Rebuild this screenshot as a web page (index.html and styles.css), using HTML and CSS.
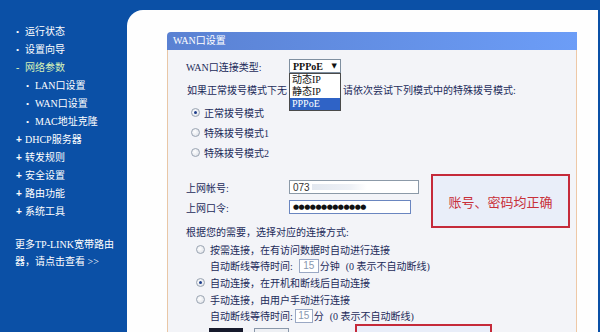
FILE: index.html
```html
<!DOCTYPE html>
<html lang="zh-CN">
<head>
    <meta charset="UTF-8">
    <title>WAN口设置</title>
    <link rel="stylesheet" href="styles.css">
</head>
<body>
    <!-- Menu lateral -->
    <aside class="sidebar">
        <ul class="menu">
            <li class="dot">运行状态</li>
            <li class="dot">设置向导</li>
            <li class="minus open">网络参数</li>
            <li class="dot sub">LAN口设置</li>
            <li class="dot sub">WAN口设置</li>
            <li class="dot sub">MAC地址克隆</li>
            <li class="plus">DHCP服务器</li>
            <li class="plus">转发规则</li>
            <li class="plus">安全设置</li>
            <li class="plus">路由功能</li>
            <li class="plus">系统工具</li>
        </ul>
        <p class="more">更多TP-LINK宽带路由<br>器，请点击查看 &gt;&gt;</p>
    </aside>

    <main class="main">
        <section class="panel">
            <div class="panel-head">WAN口设置</div>
            <div class="panel-body">
                <div class="field">
                    <span class="label">WAN口连接类型:</span>
                    <div class="select"><span>PPPoE</span><span class="arrow">▼</span></div>
                </div>
                <p class="note"><span class="cut">如果正常拨号模式下无法连接成功，</span><span class="rest">请依次尝试下列模式中的特殊拨号模式:</span></p>

                <div class="modes">
                    <div class="opt"><span class="radio checked"></span>正常拨号模式</div>
                    <div class="opt"><span class="radio"></span>特殊拨号模式1</div>
                    <div class="opt"><span class="radio"></span>特殊拨号模式2</div>
                </div>

                <div class="field account">
                    <span class="label">上网帐号:</span>
                    <div class="input user"><span>073</span><span class="blur"></span></div>
                </div>
                <div class="field password">
                    <span class="label">上网口令:</span>
                    <div class="input pass">●●●●●●●●●●●●●</div>
                </div>

                <p class="note lead">根据您的需要，选择对应的连接方式:</p>
                <div class="connect">
                    <div class="opt"><span class="radio"></span>按需连接，在有访问数据时自动进行连接</div>
                    <div class="opt indent">自动断线等待时间: <span class="time first">15</span>分钟 <span class="hint">(0 表示不自动断线)</span></div>
                    <div class="opt"><span class="radio checked"></span>自动连接，在开机和断线后自动连接</div>
                    <div class="opt"><span class="radio"></span>手动连接，由用户手动进行连接</div>
                    <div class="opt indent">自动断线等待时间:<span class="time">15</span>分 <span class="hint">(0 表示不自动断线)</span></div>
                </div>

                <div class="buttons">
                    <span class="btn dark"></span>
                    <span class="btn light"></span>
                </div>

                <!-- lista aberta do select -->
                <ul class="dropdown">
                    <li>动态IP</li>
                    <li>静态IP</li>
                    <li class="selected">PPPoE</li>
                </ul>

                <!-- anotações em vermelho -->
                <div class="mark mark-ok">账号、密码均正确</div>
                <div class="mark mark-bottom"></div>
            </div>
        </section>
    </main>
</body>
</html>
```

FILE: styles.css
```css
* {
    box-sizing: border-box;
}

body {
    margin: 0;
    width: 600px;
    height: 332px;
    overflow: hidden;
    display: flex;
    background-color: #0b50a6;
    font-family: "Liberation Serif", "Noto Sans CJK SC", serif;
    font-size: 10px;
    color: #1c2b5a;
}

.sidebar {
    width: 127px;
    flex: none;
    padding: 23px 0 0 15px;
    color: #fff;
}

.menu {
    list-style: none;
    margin: 0;
    padding: 0;
}

.menu li {
    height: 18px;
    line-height: 18px;
    white-space: nowrap;
}

.menu li::before {
    display: inline-block;
    width: 9px;
    padding-left: 1px;
}

.menu .dot::before {
    content: "•";
    font-size: 9px;
}

.menu .plus::before {
    content: "+";
    font-family: "Liberation Sans", sans-serif;
    font-weight: bold;
}

.menu .minus::before {
    content: "-";
    font-weight: bold;
}

.menu .open {
    color: #d6f2b8;
}

.menu .sub {
    padding-left: 10px;
}

.more {
    margin: 15px 0 0;
    line-height: 17px;
    white-space: nowrap;
}

.main {
    flex: 1;
    margin: 10px 2px 0 0;
    padding: 22px 0 0 40px;
    background-color: #fefefe;
    border-top-left-radius: 16px;
}

.panel {
    width: 410px;
}

.panel-head {
    height: 18px;
    line-height: 18px;
    padding-left: 6px;
    color: #fff;
    background: linear-gradient(to right, #5a81d2, #6c9df7);
    border-top-left-radius: 4px;
}

.panel-body {
    position: relative;
    height: 300px;
    padding: 8px 0 0 18px;
    background-color: #f3f4f8;
    border-left: 1px solid #e9c7a6;
    border-right: 1px solid #eec8a6;
}

.field {
    display: flex;
    align-items: center;
    height: 16px;
}

.label {
    width: 103px;
    flex: none;
}

.select {
    width: 52px;
    height: 14px;
    display: flex;
    justify-content: space-between;
    align-items: center;
    padding: 0 3px;
    background-color: #fff;
    border: 1px solid #7f8fa0;
    color: #111;
    font-weight: bold;
}

.select .arrow {
    font-size: 7px;
    font-family: "DejaVu Sans", sans-serif;
}

.note {
    display: flex;
    margin: 9px 0 0 1px;
    height: 16px;
    line-height: 16px;
    white-space: nowrap;
}

.note .cut {
    width: 100px;
    overflow: hidden;
}

.note .rest {
    margin-left: 56px;
}

.modes {
    margin-top: 3px;
    padding-left: 5px;
}

.modes .opt {
    height: 20px;
    gap: 4px;
}

.opt {
    display: flex;
    align-items: center;
    white-space: nowrap;
}

.radio {
    width: 9px;
    height: 9px;
    flex: none;
    border: 1px solid #9aa4b2;
    border-radius: 50%;
    background: radial-gradient(circle at 40% 40%, #fff, #d8dce4);
    position: relative;
}

.radio.checked::after {
    content: "";
    position: absolute;
    left: 2px;
    top: 2px;
    width: 3px;
    height: 3px;
    border-radius: 50%;
    background-color: #1d3d8a;
}

.account {
    margin-top: 17px;
}

.password {
    margin-top: 4px;
}

.input {
    height: 14px;
    display: flex;
    align-items: center;
    padding-left: 3px;
    background-color: #fff;
    font-family: "Liberation Sans", sans-serif;
}

.input.user {
    width: 130px;
    border: 1px solid #8c9aa8;
    color: #333;
}

.input .blur {
    width: 55px;
    height: 6px;
    margin-left: 2px;
    background: linear-gradient(to right, #e3e8f0, #eef1f6 70%, #fff);
}

.input.pass {
    width: 122px;
    border: 1px solid #6a86c0;
    color: #111;
    font-size: 7px;
    letter-spacing: -0.5px;
    font-family: "DejaVu Sans", sans-serif;
}

.lead {
    margin: 10px 0 0;
}

.connect .opt {
    height: 16.6px;
    gap: 5px;
    padding-left: 10px;
}

.connect .indent {
    padding-left: 24px;
    gap: 0;
}

.time {
    width: 18px;
    height: 14px;
    margin: 0 1px 0 2px;
    border: 1px solid #9aa8c4;
    background-color: #fff;
    color: #8898b0;
    text-align: center;
    line-height: 12px;
    font-family: "Liberation Sans", sans-serif;
}

.time.first {
    width: 20px;
    margin-left: 6px;
}

.hint {
    margin-left: 6px;
}

.buttons {
    display: flex;
    gap: 11px;
    margin: 4px 0 0 23px;
}

.btn {
    height: 20px;
    width: 34px;
}

.btn.dark {
    background-color: #171a2c;
}

.btn.light {
    width: 35px;
    border: 1px solid #8a98aa;
    background-color: #eef0f4;
}

.dropdown {
    position: absolute;
    left: 121px;
    top: 23px;
    width: 52px;
    margin: 0;
    padding: 0;
    list-style: none;
    background-color: #fff;
    border: 1px solid #4a4a4a;
    color: #111;
}

.dropdown li {
    height: 12px;
    line-height: 12px;
    padding-left: 2px;
}

.dropdown .selected {
    background-color: #2f63c6;
    color: #fff;
}

.mark {
    position: absolute;
    display: flex;
    justify-content: center;
    align-items: center;
    background-color: #e9eef9;
    border: 2px solid #c52a3a;
    color: #c8303a;
    font-family: "Noto Sans CJK SC", sans-serif;
    font-size: 13px;
}

.mark-ok {
    left: 263px;
    top: 124px;
    width: 139px;
    height: 54px;
}

.mark-bottom {
    left: 187px;
    top: 274px;
    width: 137px;
    height: 40px;
}
```
